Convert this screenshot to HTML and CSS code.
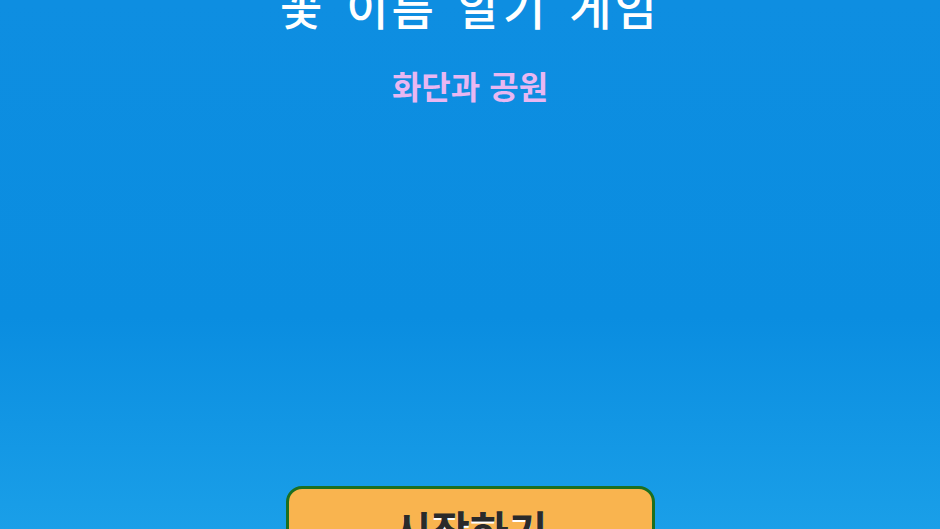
FILE: index.html
```html
<!DOCTYPE html>
<html lang="ko">
<head>
<meta charset="utf-8">
<title>꽃 이름 알기 게임</title>
<link rel="stylesheet" href="styles.css">
</head>
<body>
<main class="screen">
  <header class="head">
    <h1 class="title">꽃 이름 알기 게임</h1>
    <p class="subtitle">화단과 공원</p>
  </header>
  <div class="spacer"></div>
  <button class="start">시작하기</button>
</main>
</body>
</html>
```

FILE: styles.css
```css
html, body {
  margin: 0;
  padding: 0;
  height: 100%;
  overflow: hidden;
}
body {
  background: linear-gradient(to bottom, #0e8ee1 0%, #0a8de0 60%, #1a9fe8 100%);
  font-family: "Noto Sans CJK KR", "Noto Sans", sans-serif;
}
.screen {
  height: 529px;
  display: flex;
  flex-direction: column;
  align-items: center;
}
.head {
  display: flex;
  flex-direction: column;
  align-items: center;
  margin-top: -25px;
}
.title {
  margin: 0;
  color: #ffffff;
  font-size: 46px;
  font-weight: 500;
  line-height: 60px;
  letter-spacing: 3px;
  word-spacing: 5px;
}
.subtitle {
  margin: 30px 0 0;
  color: #e8b7f2;
  font-size: 32px;
  font-weight: 600;
  line-height: 40px;
}
.spacer {
  flex: 1;
}
.start {
  width: 369px;
  height: 90px;
  margin-bottom: -47px;
  flex: none;
  background: #f9b44f;
  border: 3px solid #1d6f1f;
  border-radius: 16px;
  color: #2a2a2a;
  font-family: "Noto Sans CJK KR", "Noto Sans", sans-serif;
  font-size: 42px;
  font-weight: 700;
  text-shadow: 0 2px 0 #ffffff;
  display: flex;
  align-items: flex-start;
  justify-content: center;
  padding: 9px 0 0;
  box-sizing: border-box;
}
```
